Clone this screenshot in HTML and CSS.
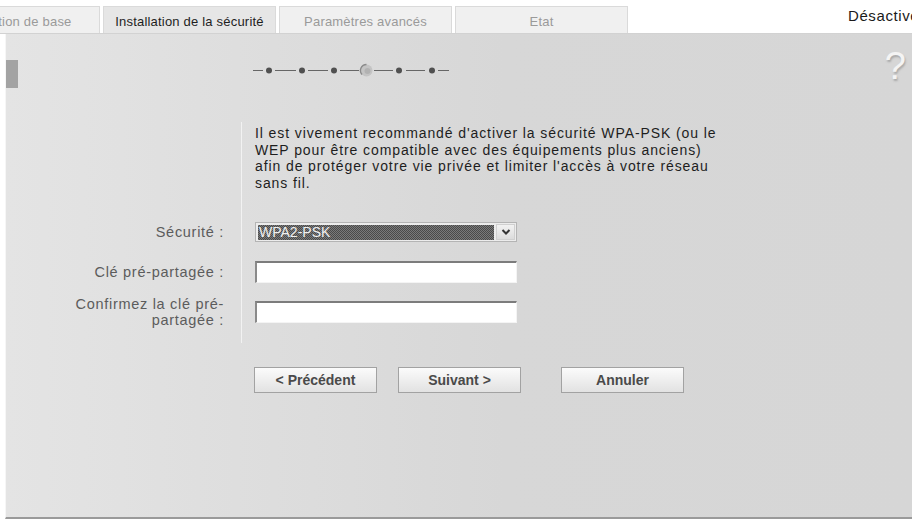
FILE: index.html
```html
<!DOCTYPE html>
<html lang="fr">
<head>
    <meta charset="UTF-8">
    <meta name="viewport" content="width=device-width, initial-scale=1.0">
    <title>Installation de la sécurité</title>
    <link rel="stylesheet" href="styles.css">
</head>
<body>
    <div class="topbar">
        <div class="tabs">
            <div class="tab">Installation de base</div>
            <div class="tab active">Installation de la sécurité</div>
            <div class="tab">Paramètres avancés</div>
            <div class="tab">Etat</div>
        </div>
        <div class="status">Désactiver le WLAN</div>
    </div>

    <div class="panel">
        <div class="help">?</div>

        <div class="wizard-head">
            <div class="marker"></div>
            <svg class="steps" width="197" height="14" viewBox="0 0 197 14">
                <g stroke="#666" stroke-width="1">
                    <line x1="0" y1="7.5" x2="10" y2="7.5"/>
                    <line x1="22" y1="7.5" x2="43" y2="7.5"/>
                    <line x1="55" y1="7.5" x2="75" y2="7.5"/>
                    <line x1="87" y1="7.5" x2="106" y2="7.5"/>
                    <line x1="121" y1="7.5" x2="140" y2="7.5"/>
                    <line x1="153" y1="7.5" x2="172" y2="7.5"/>
                    <line x1="185" y1="7.5" x2="196" y2="7.5"/>
                </g>
                <g fill="#505050">
                    <circle cx="16" cy="7.5" r="3"/>
                    <circle cx="49" cy="7.5" r="3"/>
                    <circle cx="81" cy="7.5" r="3"/>
                    <circle cx="146" cy="7.5" r="3"/>
                    <circle cx="179" cy="7.5" r="3"/>
                </g>
                <circle cx="113.5" cy="7.5" r="6" fill="#c4c4c4"/>
                <path d="M113.5 1.5 A6 6 0 0 0 109 11.5" fill="none" stroke="#8a8a8a" stroke-width="1.4"/>
                <circle cx="114.5" cy="8" r="3" fill="#b2b2b2"/>
            </svg>
        </div>

        <form class="wizard-form">
            <div class="row row-intro">
                <div class="label"></div>
                <div class="field">
                    <p class="intro">Il est vivement recommandé d'activer la sécurité WPA-PSK (ou le WEP pour être compatible avec des équipements plus anciens) afin de protéger votre vie privée et limiter l'accès à votre réseau sans fil.</p>
                </div>
            </div>
            <div class="row row-select">
                <div class="label"><span>Sécurité :</span></div>
                <div class="field">
                    <div class="select">
                        <div class="select-value">WPA2-PSK</div>
                        <div class="select-arrow">
                            <svg width="10" height="8" viewBox="0 0 10 8"><path d="M1.5 2 L5 5.5 L8.5 2" fill="none" stroke="#333" stroke-width="2"/></svg>
                        </div>
                    </div>
                </div>
            </div>
            <div class="row row-key">
                <div class="label"><span>Clé pré-partagée :</span></div>
                <div class="field"><input type="password" class="text-input"></div>
            </div>
            <div class="row row-confirm">
                <div class="label"><span>Confirmez la clé pré-partagée :</span></div>
                <div class="field"><input type="password" class="text-input"></div>
            </div>

            <div class="buttons">
                <button type="button">&lt; Précédent</button>
                <button type="button">Suivant &gt;</button>
                <button type="button" class="cancel">Annuler</button>
            </div>
        </form>
    </div>
</body>
</html>
```

FILE: styles.css
```css
body {
    margin: 0;
    font-family: "Liberation Sans", Arial, sans-serif;
    background-color: #fff;
    color: #222;
    overflow: hidden;
    width: 912px;
    height: 523px;
}
.topbar {
    display: flex;
    height: 33px;
    border-bottom: 1px solid #d2d2d2;
    margin-left: -73px;
}
.tabs {
    display: flex;
    align-items: flex-end;
}
.tab {
    width: 171px;
    height: 23px;
    padding-top: 3px;
    line-height: 23px;
    margin-right: 3px;
    border: 1px solid #dadada;
    border-bottom: none;
    background-color: #f0f0f0;
    color: #9a9a9a;
    font-size: 13px;
    letter-spacing: 0.2px;
    text-align: center;
    white-space: nowrap;
}
.tab.active {
    background-color: #e6e6e6;
    color: #1e1e1e;
}
.status {
    margin-left: 217px;
    margin-top: 7px;
    font-size: 15px;
    letter-spacing: 0.6px;
    white-space: nowrap;
    color: #1a1a1a;
}
.panel {
    position: relative;
    margin-left: 5px;
    height: 483px;
    border-left: 1px solid #f6f6f6;
    border-bottom: 2px solid #9a9a9a;
    background: linear-gradient(to right, #e4e4e4, #d7d7d7 55%, #d6d6d6);
}
.help {
    position: absolute;
    top: 13px;
    right: 6px;
    font-size: 38px;
    line-height: 38px;
    color: #f4f4f4;
    text-shadow: 1px 2px 2px #a8a8a8;
}
.wizard-head {
    display: flex;
    padding-top: 26px;
}
.marker {
    width: 12px;
    height: 28px;
    background-color: #a3a3a3;
}
.steps {
    margin-left: 235px;
    margin-top: 3px;
}
.wizard-form {
    margin-top: 34px;
}
.row {
    display: grid;
    grid-template-columns: 235px 1fr;
}
.row .label,
.row .field {
    padding-bottom: var(--gap);
}
.row-intro { --gap: 31px; }
.row-select { --gap: 19px; }
.row-key { --gap: 18px; }
.row-confirm { --gap: 15px; }
.label {
    display: flex;
    align-items: center;
    justify-content: flex-end;
    padding-right: 17px;
    font-size: 14.5px;
    line-height: 16px;
    letter-spacing: 0.7px;
    color: #5c5c5c;
    text-align: right;
}
.label span {
    max-width: 152px;
}
.row-confirm .label {
    margin-top: -5px;
}
.field {
    border-left: 1px solid #f2f2f2;
    padding-left: 13px;
}
.row-intro .field {
    padding-top: 3px;
}
.intro {
    margin: 0;
    width: 466px;
    font-size: 14px;
    line-height: 16.5px;
    letter-spacing: 0.9px;
    color: #1e1e1e;
}
.select {
    display: flex;
    align-items: center;
    justify-content: space-between;
    box-sizing: border-box;
    width: 262px;
    height: 20px;
    padding: 2px 1px 2px 2px;
    border: 1px solid #b4b4b4;
    background-color: #ececec;
}
.select-value {
    width: 235px;
    height: 15px;
    line-height: 15px;
    padding-left: 1px;
    font-size: 14px;
    color: #f0f0f0;
    background: repeating-conic-gradient(#4a4a4a 0 25%, #7a7a7a 0 50%) 0 0 / 2px 2px;
}
.select-arrow {
    display: flex;
    align-items: center;
    justify-content: center;
    width: 19px;
    height: 16px;
    background: linear-gradient(#f2f2f2, #dcdcdc);
    border: 1px solid #d0d0d0;
    box-sizing: border-box;
}
.text-input {
    display: block;
    box-sizing: border-box;
    width: 262px;
    height: 22px;
    margin: 0;
    border-style: solid;
    border-width: 2px 1px 1px 2px;
    border-color: #7c7c7c #f4f4f4 #f4f4f4 #8a8a8a;
    background-color: #fff;
}
.buttons {
    display: flex;
    margin-top: 24px;
    margin-left: 248px;
}
.buttons button {
    width: 123px;
    height: 26px;
    margin-right: 21px;
    padding: 0;
    font-family: "Liberation Sans", Arial, sans-serif;
    font-size: 14px;
    font-weight: bold;
    color: #4a4a4a;
    border: 1px solid #a2a2a2;
    background: linear-gradient(#fbfbfb, #e2e2e2);
    cursor: pointer;
}
.buttons button.cancel {
    margin-left: 19px;
}
```
